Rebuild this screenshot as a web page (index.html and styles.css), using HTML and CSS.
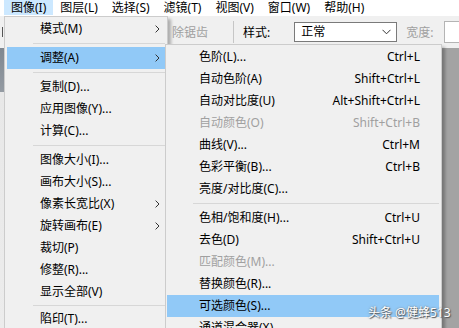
FILE: index.html
```html
<!DOCTYPE html>
<html lang="zh-CN">
<head>
<meta charset="utf-8">
<title>图像 - 调整</title>
<link rel="stylesheet" href="styles.css">
</head>
<body>
<div class="app">

  <div class="menubar">
    <span class="mb_item mb_active">图像(I)</span>
    <span class="mb_item">图层(L)</span>
    <span class="mb_item">选择(S)</span>
    <span class="mb_item">滤镜(T)</span>
    <span class="mb_item">视图(V)</span>
    <span class="mb_item">窗口(W)</span>
    <span class="mb_item">帮助(H)</span>
  </div>

  <div class="optbar">
    <span class="opt_tool"></span>
    <span class="opt_dim opt_aa">除锯齿</span>
    <span class="opt_sep"></span>
    <span class="opt_label">样式:</span>
    <span class="opt_select">正常
      <svg class="sel_arrow" width="9" height="6" viewBox="0 0 9 6"><path d="M0.5 0.8 L4.5 4.8 L8.5 0.8" fill="none" stroke="#333" stroke-width="1"/></svg>
    </span>
    <span class="opt_dim opt_width">宽度:</span>
    <span class="opt_input"></span>
  </div>

  <div class="workspace">
    <div class="doc"></div>
  </div>

  <!-- 图像 menu -->
  <div class="menu menu_main">
    <div class="mi">模式(M)<svg class="chev" width="5" height="8" viewBox="0 0 5 8"><path d="M0.6 0.6 L4 4 L0.6 7.4" fill="none" stroke="#333" stroke-width="1"/></svg></div>
    <div class="msep"></div>
    <div class="mi mi_hl">调整(A)<svg class="chev" width="5" height="8" viewBox="0 0 5 8"><path d="M0.6 0.6 L4 4 L0.6 7.4" fill="none" stroke="#333" stroke-width="1"/></svg></div>
    <div class="msep"></div>
    <div class="mi">复制(D)...</div>
    <div class="mi">应用图像(Y)...</div>
    <div class="mi">计算(C)...</div>
    <div class="msep"></div>
    <div class="mi">图像大小(I)...</div>
    <div class="mi">画布大小(S)...</div>
    <div class="mi">像素长宽比(X)<svg class="chev" width="5" height="8" viewBox="0 0 5 8"><path d="M0.6 0.6 L4 4 L0.6 7.4" fill="none" stroke="#333" stroke-width="1"/></svg></div>
    <div class="mi">旋转画布(E)<svg class="chev" width="5" height="8" viewBox="0 0 5 8"><path d="M0.6 0.6 L4 4 L0.6 7.4" fill="none" stroke="#333" stroke-width="1"/></svg></div>
    <div class="mi">裁切(P)</div>
    <div class="mi">修整(R)...</div>
    <div class="mi">显示全部(V)</div>
    <div class="msep msep_last"></div>
    <div class="mi">陷印(T)...</div>
  </div>

  <!-- 调整 submenu -->
  <div class="menu menu_sub">
    <div class="mi"><span>色阶(L)...</span><span class="key">Ctrl+L</span></div>
    <div class="mi"><span>自动色阶(A)</span><span class="key">Shift+Ctrl+L</span></div>
    <div class="mi"><span>自动对比度(U)</span><span class="key">Alt+Shift+Ctrl+L</span></div>
    <div class="mi mi_off"><span>自动颜色(O)</span><span class="key">Shift+Ctrl+B</span></div>
    <div class="mi"><span>曲线(V)...</span><span class="key">Ctrl+M</span></div>
    <div class="mi"><span>色彩平衡(B)...</span><span class="key">Ctrl+B</span></div>
    <div class="mi"><span>亮度/对比度(C)...</span></div>
    <div class="msep"></div>
    <div class="mi"><span>色相/饱和度(H)...</span><span class="key">Ctrl+U</span></div>
    <div class="mi"><span>去色(D)</span><span class="key">Shift+Ctrl+U</span></div>
    <div class="mi mi_off"><span>匹配颜色(M)...</span></div>
    <div class="mi"><span>替换颜色(R)...</span></div>
    <div class="mi mi_hl"><span>可选颜色(S)...</span></div>
    <div class="mi"><span>通道混合器(X)...</span></div>
  </div>

  <div class="watermark">头条 @健蜂513</div>
</div>
</body>
</html>
```

FILE: styles.css
```css
body {
  margin: 0;
  font-family: "Noto Sans", "Noto Sans CJK SC", sans-serif;
  font-size: 12px;
  color: #000;
}

.app {
  position: relative;
  width: 459px;
  height: 328px;
  overflow: hidden;
  display: flex;
  flex-direction: column;
  background: #a3a3a3;
}

/* top menu bar */
.menubar {
  height: 16px;
  background: #fff;
  display: flex;
  padding-left: 4px;
  flex-shrink: 0;
}
.mb_item {
  padding: 0 7px;
  height: 15px;
  line-height: 15px;
  white-space: nowrap;
}
.mb_active {
  background: #cce8ff;
}

/* tool options bar */
.optbar {
  height: 32px;
  background: #f0f0f0;
  display: flex;
  align-items: center;
  flex-shrink: 0;
}
.optbar > * {
  flex-shrink: 0;
  white-space: nowrap;
}
.opt_tool {
  width: 1px;
  height: 10px;
  background: #555;
  margin-left: 2px;
}
.opt_dim {
  color: #a0a0a0;
}
.opt_aa {
  margin-left: 169px;
}
.opt_sep {
  width: 1px;
  height: 22px;
  background: #c6c6c6;
  margin-left: 25px;
}
.opt_label {
  margin-left: 9px;
}
.opt_select {
  margin-left: 24px;
  width: 90px;
  height: 18px;
  line-height: 18px;
  border: 1px solid #7a7a7a;
  background: #fff;
  padding: 0 5px 0 6px;
  display: flex;
  align-items: center;
  justify-content: space-between;
}
.opt_width {
  margin-left: 9px;
}
.opt_input {
  margin-left: 11px;
  width: 40px;
  height: 20px;
  border: 1px solid #b4b4b4;
  background: #fff;
}

/* document area */
.workspace {
  flex: 1;
  display: flex;
}
.doc {
  width: 200px;
  background: linear-gradient(to bottom, #7f8790 0, #949ba3 44px, #e8e8e8 44px, #ececec 100%);
}

/* drop-down menus */
.menu {
  position: absolute;
  background: #f0f0f0;
  border: 1px solid #cccccc;
  box-shadow: 3px 3px 3px rgba(0, 0, 0, 0.28);
}
.menu_main {
  left: 4px;
  top: 16px;
  width: 158px;
  height: 330px;
  padding: 1px 2px;
}
.menu_sub {
  left: 165px;
  top: 44px;
  width: 272px;
  height: 300px;
  padding: 1px 2px 1px 1px;
}
.mi {
  height: 22px;
  line-height: 22px;
  display: flex;
  align-items: center;
  justify-content: space-between;
  white-space: nowrap;
}
.menu_main .mi {
  padding: 0 5px 0 33px;
}
.menu_sub .mi {
  padding: 0 19px 0 32px;
}
.mi_hl {
  background: #91c9f7;
}
.mi_off {
  color: #a0a0a0;
}
.msep {
  height: 1px;
  background: #d7d7d7;
  margin: 3px 0 3px 26px;
}
.msep_last {
  margin: 2px 0 2px 26px;
}
.chev {
  display: block;
}

.watermark {
  position: absolute;
  left: 368px;
  top: 305px;
  color: #fff;
  font-size: 12px;
  line-height: 16px;
  text-shadow: 1px 1px 1px #555, 0 0 2px #777;
}
```
